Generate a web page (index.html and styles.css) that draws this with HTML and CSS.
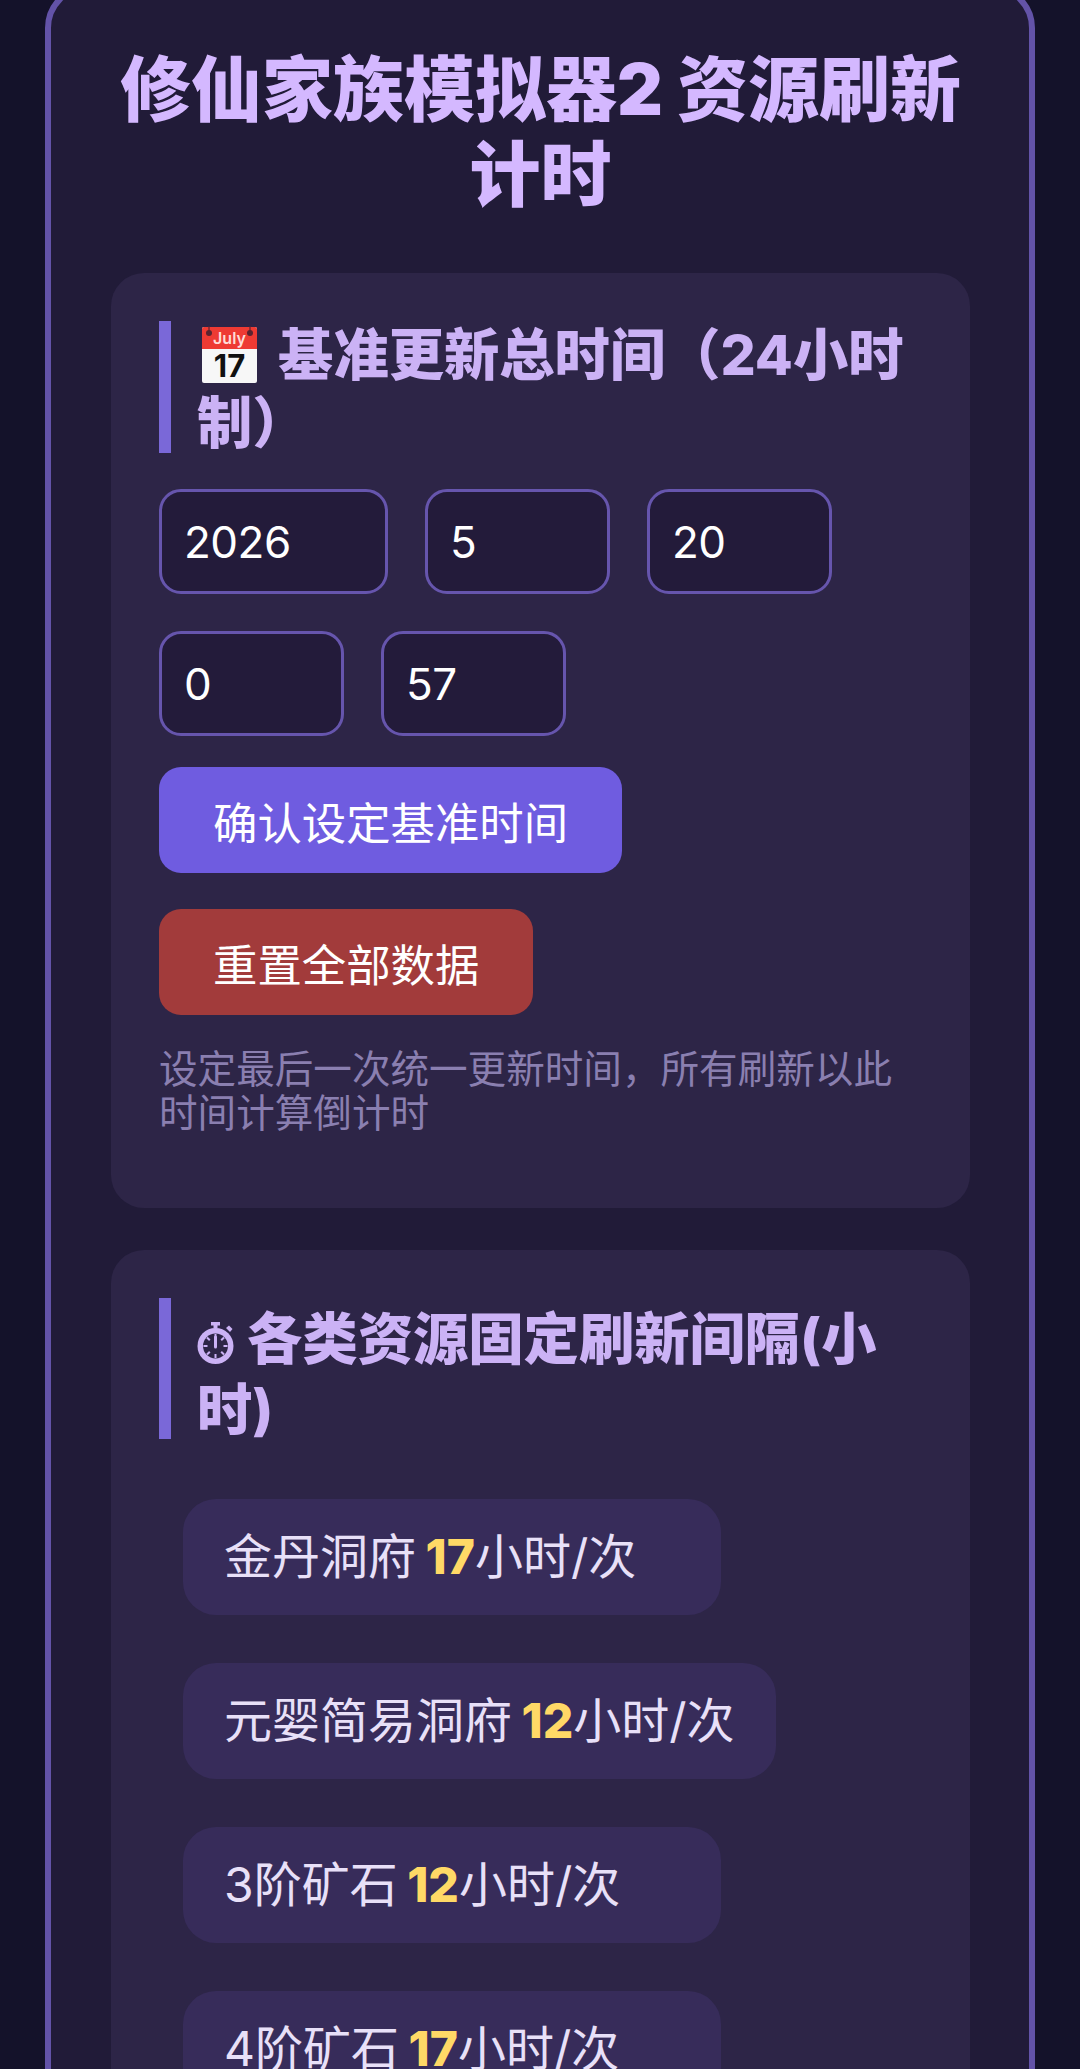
FILE: index.html
```html
<!DOCTYPE html>
<html lang="zh">
<head>
    <meta charset="utf-8">
    <title>修仙家族模拟器2 资源刷新计时</title>
    <link rel="stylesheet" href="styles.css">
</head>
<body>
    <div class="container">
        <h1>修仙家族模拟器2 资源刷新计时</h1>

        <!-- base time -->
        <section class="card">
            <h2 class="card-title">
                <svg class="icon-calendar" viewBox="0 0 55 57" aria-hidden="true">
                    <rect x="0" y="1" width="55" height="56" rx="2" fill="#f7f7f7"/>
                    <path d="M2 1h51a2 2 0 0 1 2 2v20H0V3a2 2 0 0 1 2-2z" fill="#ee3a33"/>
                    <circle cx="7" cy="7" r="3" fill="#5a2430"/>
                    <circle cx="48" cy="7" r="3" fill="#5a2430"/>
                    <path d="M7 0v6M48 0v6" stroke="#5a2430" stroke-width="1.2"/>
                    <text x="27.500" y="18" class="cal-month">July</text>
                    <text x="27.500" y="51" class="cal-day">17</text>
                </svg>
                基准更新总时间（24小时制）
            </h2>
            <div class="time-row">
                <input class="time-input year" type="text" value="2026">
                <input class="time-input" type="text" value="5">
                <input class="time-input" type="text" value="20">
                <input class="time-input" type="text" value="0">
                <input class="time-input" type="text" value="57">
            </div>
            <div class="actions">
                <button class="btn btn-primary" type="button">确认设定基准时间</button>
                <button class="btn btn-danger" type="button">重置全部数据</button>
            </div>
            <p class="note">设定最后一次统一更新时间，所有刷新以此时间计算倒计时</p>
        </section>

        <!-- fixed intervals -->
        <section class="card">
            <h2 class="card-title title-tall">
                <svg class="icon-watch" viewBox="0 0 37 42" aria-hidden="true">
                    <path d="M14 0h9v3.5h-2.500v3h-4v-3H14z" fill="currentColor"/>
                    <path d="M29 6l3-2.500 3.500 3.500-2.500 3z" fill="currentColor"/>
                    <circle cx="18.500" cy="24" r="18" fill="currentColor"/>
                    <circle cx="18.500" cy="24" r="12.500" fill="#2d2547"/>
                    <path d="M18.500 12v4M18.500 32v4M6.500 24h4M26.500 24h4M10 15.500l2.800 2.800M27 15.500l-2.800 2.800M10 32.500l2.800-2.800M27 32.500l-2.800-2.800" stroke="currentColor" stroke-width="2"/>
                    <path d="M18.500 15v10" stroke="currentColor" stroke-width="3" stroke-linecap="round"/>
                </svg>
                各类资源固定刷新间隔(小时)
            </h2>
            <ul class="interval-list">
                <li class="interval-item">金丹洞府 <b>17</b>小时/次</li>
                <li class="interval-item">元婴简易洞府 <b>12</b>小时/次</li>
                <li class="interval-item">3阶矿石 <b>12</b>小时/次</li>
                <li class="interval-item">4阶矿石 <b>17</b>小时/次</li>
            </ul>
        </section>
    </div>
</body>
</html>
```

FILE: styles.css
```css
html, body {
    height: 2069px;
    overflow: hidden;
}

body {
    margin: 0;
    background: #14122a;
    color: #e8e0f8;
    font-family: Inter, "Noto Sans CJK SC", sans-serif;
}

.container {
    box-sizing: border-box;
    width: 990px;
    height: 2200px;
    margin: -16px auto 0;
    padding: 57px 59px 0 60px;
    background: #211b38;
    border: 6px solid #6353a8;
    border-radius: 44px;
}

h1 {
    margin: 0 0 57px;
    color: #d4b8ff;
    font-size: 71px;
    font-weight: 900;
    line-height: 84.500px;
    text-align: center;
}

.card {
    padding: 48px 48px 73px;
    margin-bottom: 42px;
    background: #2d2547;
    border-radius: 33px;
}

.card-title {
    box-sizing: border-box;
    height: 132px;
    margin: 0 0 36px;
    padding-left: 26px;
    border-left: 12px solid #7a68d8;
    color: #cbb2f5;
    font-size: 55.300px;
    font-weight: 800;
    line-height: 68px;
}

.title-tall {
    height: 141px;
    padding-top: 5px;
    line-height: 71px;
    margin-bottom: 60px;
}

.icon-calendar {
    width: 55px;
    height: 57px;
    margin: 0 9px 0 5px;
    vertical-align: -8px;
}

.cal-month {
    fill: #ffdcd8;
    font-size: 16px;
    font-weight: 600;
    text-anchor: middle;
}

.cal-day {
    fill: #111;
    font-size: 31px;
    font-weight: 700;
    text-anchor: middle;
}

.icon-watch {
    width: 37px;
    height: 42px;
    margin-right: 1px;
    vertical-align: -5px;
}

.time-row {
    display: flex;
    flex-wrap: wrap;
    gap: 37px;
    margin-bottom: 31px;
}

.time-input {
    box-sizing: border-box;
    width: 185px;
    height: 105px;
    padding: 0 22px;
    background: #231b3a;
    border: 3px solid #6655ad;
    border-radius: 22px;
    color: #fff;
    font: inherit;
    font-size: 44px;
    letter-spacing: -0.5px;
}

.time-input.year {
    width: 229px;
}

.actions {
    display: flex;
    flex-direction: column;
    align-items: flex-start;
    gap: 36px;
}

.btn {
    height: 106px;
    padding: 0 54px;
    border: none;
    border-radius: 22px;
    color: #fff;
    font: inherit;
    font-size: 44.400px;
}

.btn-primary { background: #6f5ce0; }
.btn-danger { background: #a23b3b; }

.note {
    margin: 32px 0 0;
    color: #8a7fb0;
    font-size: 38.600px;
    line-height: 44px;
}

.interval-list {
    display: flex;
    flex-direction: column;
    align-items: flex-start;
    gap: 48px;
    margin: 0;
    padding: 0 0 0 24px;
    list-style: none;
}

.interval-item {
    box-sizing: border-box;
    min-width: 538px;
    height: 116px;
    padding: 0 41px;
    background: #372c5a;
    border-radius: 33px;
    color: #e8e0f8;
    font-size: 48px;
    line-height: 116px;
    word-spacing: -4px;
}

.interval-item b {
    color: #ffd966;
    font-weight: 800;
}
```
